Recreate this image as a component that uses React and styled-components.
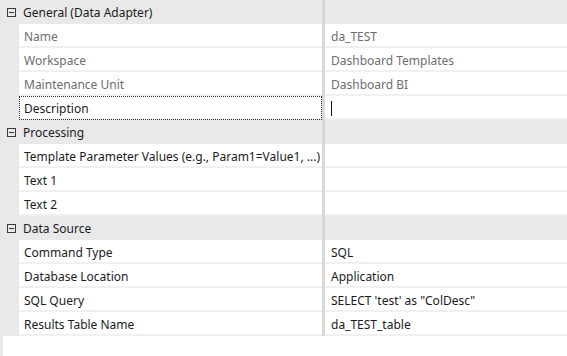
import React from "react";
import styled, { createGlobalStyle } from "styled-components";

const GlobalStyle = createGlobalStyle`
  html, body {
    margin: 0;
    padding: 0;
    background: #ffffff;
  }
  body {
    font-family: "Noto Sans", "Liberation Sans", sans-serif;
    font-size: 12px;
    color: #1b1b1b;
  }
`;

const Grid = styled.div`
  width: 567px;
  height: 356px;
  box-sizing: border-box;
  border-left: 3px solid #e8e8e8;
  background: #ffffff;
  overflow: hidden;
`;

const CategoryRow = styled.div`
  display: flex;
  height: 24px;
  background: #e9e9e9;
`;

const Gutter = styled.div`
  width: 16px;
  flex-shrink: 0;
  background: #e9e9e9;
  display: flex;
  align-items: center;
`;

const Toggle = styled.span`
  width: 9px;
  height: 9px;
  margin-left: 4px;
  box-sizing: border-box;
  border: 1px solid #3a3a3a;
  display: flex;
  align-items: center;
  justify-content: center;
  &::after {
    content: "";
    width: 5px;
    height: 1px;
    background: #3a3a3a;
  }
`;

const CategoryTitle = styled.div`
  width: 303px;
  flex-shrink: 0;
  padding-left: 4px;
  box-sizing: border-box;
  display: flex;
  align-items: center;
  white-space: nowrap;
`;

const Splitter = styled.div`
  width: 3px;
  flex-shrink: 0;
  background: ${(p) => (p.$dark ? "#d6d6d6" : "#d9d9d9")};
`;

const Rest = styled.div`
  flex: 1;
`;

const PropRow = styled.div`
  display: flex;
  height: 24px;
`;

const Cell = styled.div`
  box-sizing: border-box;
  background: #ffffff;
  border-bottom: 2px solid #f0f0f0;
  padding-top: 2px;
  display: flex;
  align-items: center;
  white-space: nowrap;
  overflow: hidden;
  color: ${(p) => (p.$readOnly ? "#6d6d6d" : "#1b1b1b")};
`;

const LabelCell = styled(Cell)`
  width: 303px;
  flex-shrink: 0;
  padding-left: 5px;
  outline: ${(p) => (p.$focused ? "1px dotted #2b2b2b" : "none")};
  outline-offset: -1px;
`;

const ValueCell = styled(Cell)`
  flex: 1;
  padding-left: 6px;
`;

const Caret = styled.span`
  width: 1px;
  height: 15px;
  background: #111;
`;

const sections = [
  {
    title: "General (Data Adapter)",
    props: [
      { name: "Name", value: "da_TEST", readOnly: true },
      { name: "Workspace", value: "Dashboard Templates", readOnly: true },
      { name: "Maintenance Unit", value: "Dashboard BI", readOnly: true },
      { name: "Description", value: "", focused: true },
    ],
  },
  {
    title: "Processing",
    props: [
      { name: "Template Parameter Values (e.g., Param1=Value1, ...)", value: "" },
      { name: "Text 1", value: "" },
      { name: "Text 2", value: "" },
    ],
  },
  {
    title: "Data Source",
    props: [
      { name: "Command Type", value: "SQL" },
      { name: "Database Location", value: "Application" },
      { name: "SQL Query", value: "SELECT 'test' as \"ColDesc\"" },
      { name: "Results Table Name", value: "da_TEST_table" },
    ],
  },
];

function App() {
  return (
    <>
      <GlobalStyle />
      <Grid>
        {sections.map((s) => (
          <React.Fragment key={s.title}>
            <CategoryRow>
              <Gutter>
                <Toggle />
              </Gutter>
              <CategoryTitle>{s.title}</CategoryTitle>
              <Splitter $dark />
              <Rest />
            </CategoryRow>
            {s.props.map((p) => (
              <PropRow key={p.name}>
                <Gutter />
                <LabelCell $readOnly={p.readOnly} $focused={p.focused}>
                  {p.name}
                </LabelCell>
                <Splitter />
                <ValueCell $readOnly={p.readOnly}>
                  {p.focused ? <Caret /> : p.value}
                </ValueCell>
              </PropRow>
            ))}
          </React.Fragment>
        ))}
      </Grid>
    </>
  );
}

export default App;
